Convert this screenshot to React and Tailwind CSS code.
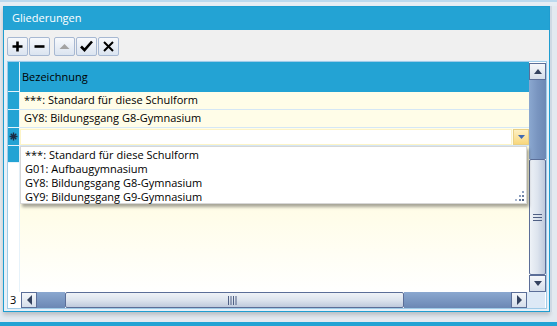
import React from "react";

const font = "font-['Open_Sans','Liberation_Sans',Arial,sans-serif]";

function ToolButton({ children }) {
    return (
        <div className="w-[21px] h-[19px] flex items-center justify-center rounded-[2px] border border-[#a7b8d2] bg-gradient-to-b from-[#f7f9fc] to-[#dbe4f0]">
            {children}
        </div>
    );
}

function ArrowButton({ dir, className = "" }) {
    const paths = {
        up: "M1 6 L5 1 L9 6 Z",
        down: "M1 1 L9 1 L5 6 Z",
        left: "M6 0 L6 10 L1 5 Z",
        right: "M1 0 L1 10 L6 5 Z",
    };
    const vertical = dir === "up" || dir === "down";
    return (
        <div className={"flex items-center justify-center border border-[#5b6e98] bg-gradient-to-b from-[#f5f7fa] to-[#d5deea] " + className}>
            <svg width={vertical ? 10 : 7} height={vertical ? 7 : 10} viewBox={vertical ? "0 0 10 7" : "0 0 7 10"}>
                <path d={paths[dir]} fill="#34425f" />
            </svg>
        </div>
    );
}

function Gutter() {
    return (
        <div className="w-[12px] flex flex-col border-r border-[#e6f2fa] bg-white">
            <div className="h-[30px] bg-[#23a3d4] border-b border-[#e6f2fa]" />
            <div className="h-[18px] bg-[#23a3d4] border-b border-[#e6f2fa]" />
            <div className="h-[18px] bg-[#23a3d4] border-b border-[#e6f2fa]" />
            <div className="h-[18px] bg-[#23a3d4] border-b border-[#e6f2fa] flex items-center justify-center">
                <svg width="9" height="9" viewBox="0 0 9 9">
                    <path d="M4.5 0.5 V8.5 M0.5 4.5 H8.5 M1.7 1.7 L7.3 7.3 M7.3 1.7 L1.7 7.3" stroke="#1d2c44" strokeWidth="1.4" />
                    <circle cx="4.5" cy="4.5" r="1.6" fill="#1d2c44" />
                </svg>
            </div>
            <div className="h-[17px] bg-[#23a3d4] border-b border-[#e6f2fa]" />
            <div className="flex-1 bg-white" />
        </div>
    );
}

function VScroll() {
    return (
        <div className="w-[17px] flex flex-col">
            <ArrowButton dir="up" className="h-[17px] mt-[1px]" />
            <div className="h-[79px] bg-gradient-to-r from-[#8ba8d0] via-[#7995c0] to-[#6c88b4]" />
            <div className="flex-1 border border-[#5b6e98] rounded-[2px] bg-gradient-to-r from-[#eef2f7] via-[#dde4ee] to-[#bfcadc] flex items-center justify-center">
                <svg width="9" height="7" viewBox="0 0 9 7">
                    <path d="M0 0.5 H9 M0 3.5 H9 M0 6.5 H9" stroke="#4e5f84" strokeWidth="1" />
                </svg>
            </div>
            <ArrowButton dir="down" className="h-[17px]" />
        </div>
    );
}

function HScroll() {
    return (
        <div className="h-[16px] flex">
            <div className="w-[13px] bg-white text-[11px] leading-[16px] pl-[2px] text-black">3</div>
            <ArrowButton dir="left" className="w-[16px]" />
            <div className="w-[28px] bg-gradient-to-b from-[#8ba8d0] to-[#6c88b4]" />
            <div className="w-[339px] border border-[#5b6e98] rounded-[2px] bg-gradient-to-b from-[#eef2f7] via-[#dde4ee] to-[#bfcadc] flex items-center justify-center">
                <svg width="9" height="9" viewBox="0 0 9 9" className="-ml-[4px]">
                    <path d="M0.5 0 V9 M3 0 V9 M5.5 0 V9 M8 0 V9" stroke="#4e5f84" strokeWidth="1" />
                </svg>
            </div>
            <div className="w-[107px] bg-gradient-to-b from-[#8ba8d0] to-[#6c88b4]" />
            <ArrowButton dir="right" className="w-[16px]" />
            <div className="w-[18px] bg-[#dde9f6]" />
        </div>
    );
}

function Dropdown() {
    const items = [
        "***: Standard für diese Schulform",
        "G01: Aufbaugymnasium",
        "GY8: Bildungsgang G8-Gymnasium",
        "GY9: Bildungsgang G9-Gymnasium",
    ];
    return (
        <div className="absolute left-[12px] top-[84px] w-[507px] h-[58px] bg-white border border-[#d7d7d7] shadow-[2px_3px_3px_rgba(0,0,0,0.35)] pt-[1px]">
            {items.map((item) => (
                <div key={item} className="h-[14px] leading-[14px] pl-[4px] text-[11px] text-black whitespace-nowrap">
                    {item}
                </div>
            ))}
            <svg width="10" height="10" viewBox="0 0 10 10" className="absolute right-[2px] bottom-[2px]">
                <rect x="8" y="0" width="2" height="2" fill="#8da0c0" />
                <rect x="5" y="4" width="2" height="2" fill="#8da0c0" />
                <rect x="8" y="4" width="2" height="2" fill="#6b7fa3" />
                <rect x="1" y="8" width="2" height="2" fill="#a8b6ce" />
                <rect x="5" y="8" width="2" height="2" fill="#6b7fa3" />
                <rect x="8" y="8" width="2" height="2" fill="#4e5f84" />
            </svg>
        </div>
    );
}

function Grid() {
    return (
        <div className="flex-1 flex flex-col border border-[#9fcbe8] bg-white">
            <div className="flex-1 flex relative">
                <Gutter />
                <div className="flex-1 flex flex-col">
                    <div className="h-[30px] bg-[#23a3d4] flex items-center pl-[2px] text-[11px] text-black">
                        Bezeichnung
                    </div>
                    <div className="h-[18px] bg-[#fffde8] border-b border-[#d5e7f5] flex items-center pl-[4px] text-[11px] text-black">
                        ***: Standard für diese Schulform
                    </div>
                    <div className="h-[18px] bg-[#fffde8] border-b border-[#d5e7f5] flex items-center pl-[4px] text-[11px] text-black">
                        GY8: Bildungsgang G8-Gymnasium
                    </div>
                    <div className="h-[18px] bg-[#fffde8] border-b border-[#d5e7f5] flex items-center">
                        <div className="flex-1 h-[16px] bg-white border border-[#fdf4c6]" />
                        <div className="w-[16px] h-[16px] ml-[1px] border border-[#e9cf85] bg-gradient-to-b from-[#fdf0c2] to-[#f8d77c] flex items-center justify-center">
                            <svg width="7" height="4" viewBox="0 0 7 4">
                                <path d="M0 0 H7 L3.5 4 Z" fill="#3f69b3" />
                            </svg>
                        </div>
                    </div>
                    <div className="flex-1 bg-gradient-to-b from-[#fffbd9] via-[#fffdea] to-[#ffffff]" />
                </div>
                <VScroll />
                <Dropdown />
            </div>
            <HScroll />
        </div>
    );
}

export default function App() {
    return (
        <div className={"w-[557px] h-[326px] overflow-hidden bg-[#e3e9f0] flex flex-col " + font}>
            <div className="h-[2px] bg-[#bcd9ee]" />
            <div className="h-[4px] bg-[#e6edf4]" />
            <div className="flex">
                <div className="w-[3px] bg-[#e6eaef]" />
                <div className="w-[547px] h-[306px] border border-[#1f9dd0] flex flex-col bg-[#e6f0f8] shadow-[0_3px_4px_rgba(0,0,0,0.18)]">
                    <div className="h-[23px] bg-[#23a3d4] flex items-center pl-[8px] text-[11px] text-white">
                        Gliederungen
                    </div>
                    <div className="h-[30px] bg-[#f0f0f0] flex items-center gap-[1px] pl-[3px] pt-[2px]">
                        <ToolButton>
                            <svg width="11" height="11" viewBox="0 0 11 11">
                                <path d="M5.5 0.5 V10.5 M0.5 5.5 H10.5" stroke="#000" strokeWidth="2.6" />
                            </svg>
                        </ToolButton>
                        <ToolButton>
                            <svg width="11" height="11" viewBox="0 0 11 11">
                                <path d="M0.5 5.5 H10.5" stroke="#000" strokeWidth="2.6" />
                            </svg>
                        </ToolButton>
                        <div className="w-[2px]" />
                        <ToolButton>
                            <svg width="11" height="7" viewBox="0 0 11 7">
                                <path d="M0.5 6 L5.5 1 L10.5 6 Z" fill="#a3a3a3" />
                            </svg>
                        </ToolButton>
                        <ToolButton>
                            <svg width="13" height="12" viewBox="0 0 13 12">
                                <path d="M1 6.5 L4.5 10 L12 1.5" stroke="#000" strokeWidth="2.6" fill="none" />
                            </svg>
                        </ToolButton>
                        <ToolButton>
                            <svg width="11" height="11" viewBox="0 0 11 11">
                                <path d="M1 1 L10 10 M10 1 L1 10" stroke="#000" strokeWidth="2" />
                            </svg>
                        </ToolButton>
                    </div>
                    <div className="flex-1 flex flex-col pl-[3px] pr-[2px] pt-[1px] pb-[2px]">
                        <Grid />
                    </div>
                </div>
                <div className="w-[2px] bg-[#cfd9e4]" />
                <div className="w-[5px] bg-[#e3e9f0]" />
            </div>
            <div className="flex-1" />
            <div className="h-[4px] bg-[#23a3d4]" />
        </div>
    );
}
